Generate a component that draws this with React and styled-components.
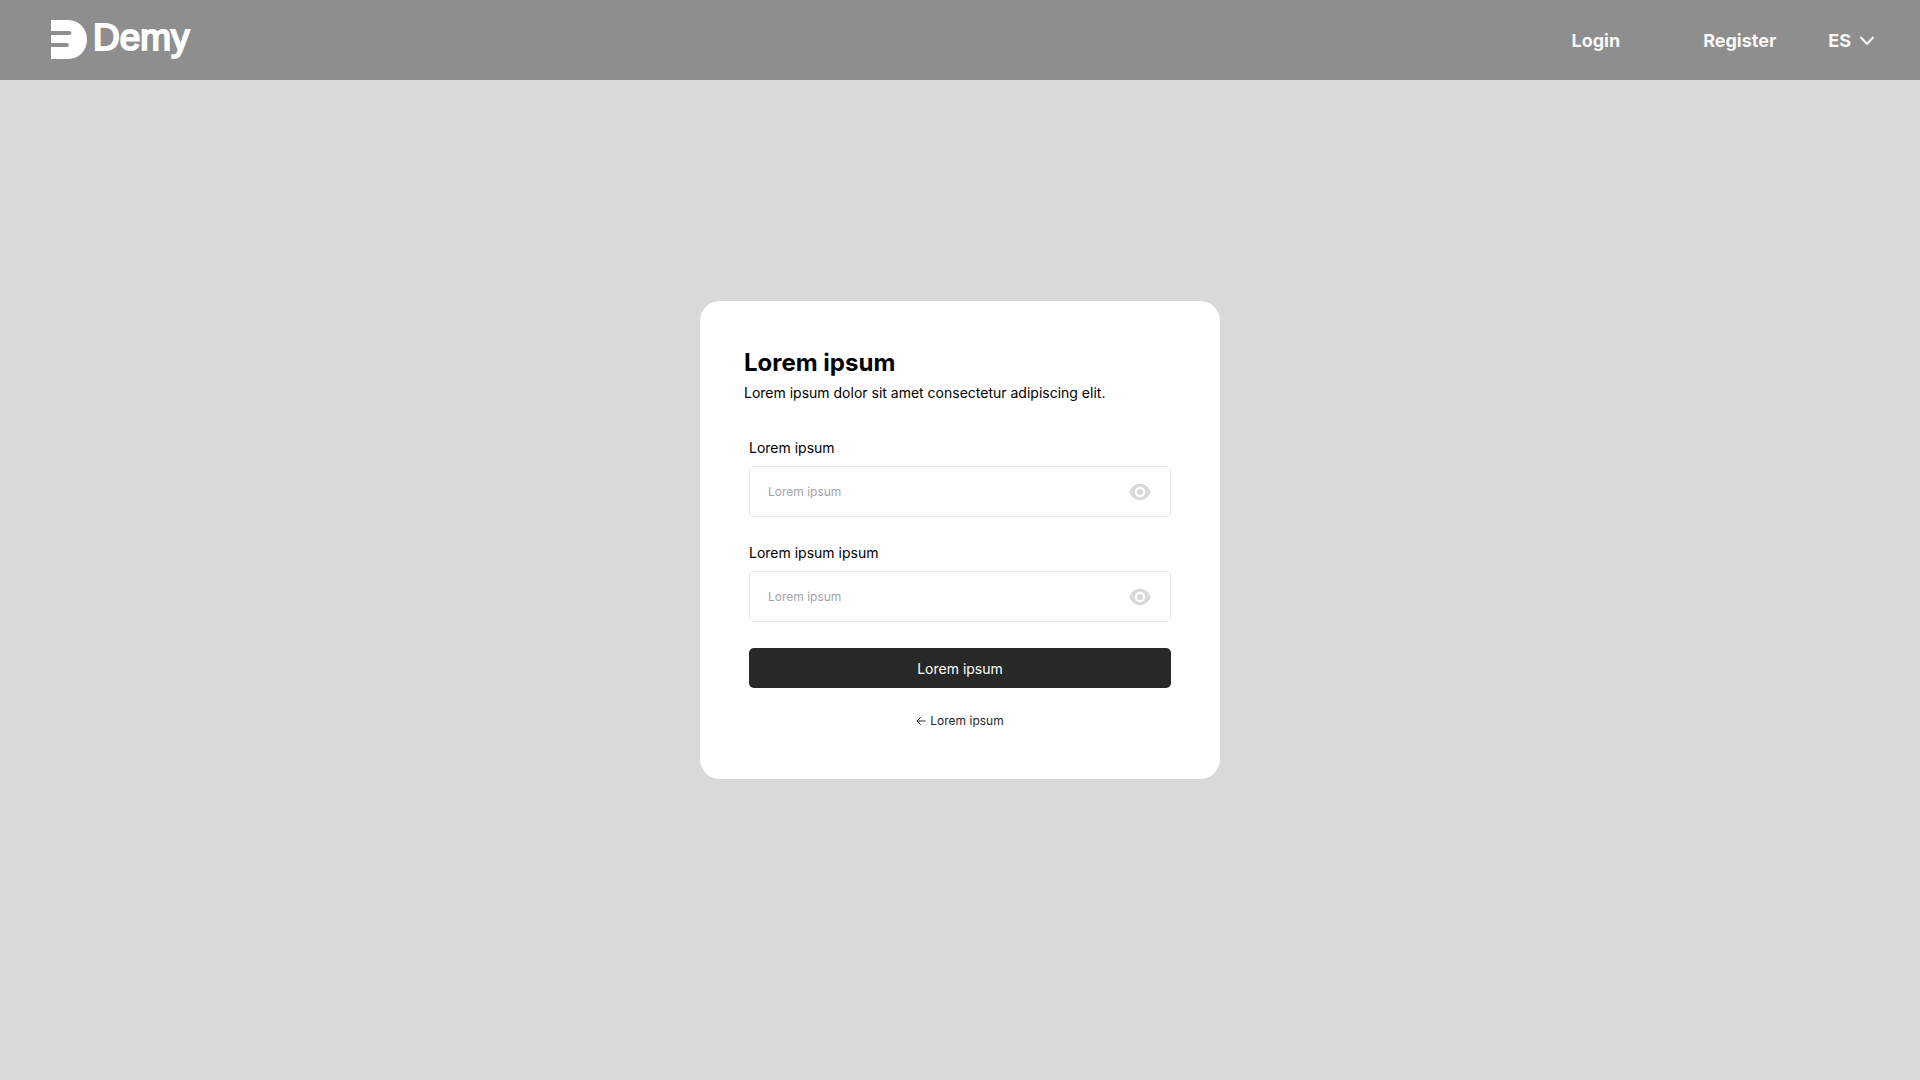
import React, { useState } from "react";
import styled, { createGlobalStyle } from "styled-components";

const GlobalStyle = createGlobalStyle`
  *, *::before, *::after { box-sizing: border-box; }
  body { margin: 0; background: #d9d9d9; font-family: Inter, "Liberation Sans", sans-serif; color: #000; }
  input, button, select { font-family: inherit; }
`;

const Page = styled.div`
  display: flex;
  flex-direction: column;
  min-height: 100vh;
`;

const Header = styled.header`
  display: flex;
  align-items: center;
  justify-content: space-between;
  height: 80px;
  padding: 0 44px 0 51px;
  background: #8e8e8e;
`;

const Logo = styled.a`
  display: flex;
  align-items: flex-start;
  gap: 6px;
  padding-bottom: 2px;
  color: #fff;
  text-decoration: none;
`;

const LogoMark = styled.svg`
  display: block;
  width: 36px;
  height: 39px;
`;

const LogoName = styled.span`
  font: 400 37px/36px "Liberation Sans", sans-serif;
  -webkit-text-stroke: 2px #fff;
`;

const Nav = styled.nav`
  display: flex;
  align-items: center;
  padding-top: 2px;
`;

const NavLink = styled.a`
  margin-right: ${(p) => (p.$wide ? "83px" : "52px")};
  color: #f8f8f8;
  font-size: 18px;
  font-weight: 700;
  line-height: 24px;
  text-decoration: none;
`;

const Language = styled.label`
  display: flex;
  align-items: center;
  gap: 7px;
  color: #f8f8f8;
`;

const LanguageSelect = styled.select`
  appearance: none;
  field-sizing: content;
  padding: 0;
  border: 0;
  background: transparent;
  color: inherit;
  font-size: 18px;
  font-weight: 700;
  line-height: 24px;
`;

const Main = styled.main`
  display: flex;
  flex: 1;
  align-items: center;
  justify-content: center;
  padding: 0 16px 80px;
`;

const Card = styled.section`
  width: 100%;
  max-width: 520px;
  padding: 44px 44px 49px;
  border-radius: 20px;
  background: #fff;
`;

const Title = styled.h1`
  margin: 0;
  font-size: 24px;
  font-weight: 700;
  line-height: 36px;
`;

const Subtitle = styled.p`
  margin: 0;
  font-size: 14px;
  line-height: 24px;
`;

const Form = styled.form`
  display: flex;
  flex-direction: column;
  padding: 33px 5px 0;
`;

const Fields = styled.div`
  display: flex;
  flex-direction: column;
  gap: 26px;
  margin-bottom: 26px;
`;

const Field = styled.div`
  display: flex;
  flex-direction: column;
  gap: 8px;
`;

const Label = styled.label`
  font-size: 14px;
  line-height: 20px;
`;

const InputBox = styled.div`
  display: flex;
  align-items: center;
  height: 51px;
  padding: 0 18px;
  border: 1px solid #e9e9e9;
  border-radius: 4px;
`;

const Input = styled.input`
  flex: 1;
  min-width: 0;
  padding: 0;
  border: 0;
  outline: 0;
  background: transparent;
  font-size: 12px;
  line-height: 20px;
  &::placeholder { color: #a3a3a8; opacity: 1; }
`;

const EyeButton = styled.button`
  display: flex;
  padding: 0;
  border: 0;
  background: transparent;
  color: #d9d9d9;
  cursor: pointer;
`;

const Submit = styled.button`
  height: 40px;
  border: 0;
  border-radius: 5px;
  background: #282828;
  color: #fff;
  font-size: 14px;
  cursor: pointer;
`;

const BackLink = styled.a`
  display: flex;
  align-items: center;
  align-self: center;
  gap: 4px;
  margin-top: 24px;
  color: #282828;
  font-size: 12px;
  line-height: 18px;
  text-decoration: none;
`;

function PasswordField({ id, label }) {
  const [visible, setVisible] = useState(false);
  return (
    <Field>
      <Label htmlFor={id}>{label}</Label>
      <InputBox>
        <Input id={id} type={visible ? "text" : "password"} placeholder="Lorem ipsum" />
        <EyeButton type="button" aria-label="Show password" onClick={() => setVisible(!visible)}>
          <svg width="24" height="24" viewBox="0 0 24 24" fill="currentColor" aria-hidden="true">
            <path fillRule="evenodd" d="M12 3.8C7.2 3.8 3.1 7.2 1.2 12c1.9 4.8 6 8.2 10.8 8.2s8.900-3.400 10.800-8.200C20.900 7.200 16.800 3.800 12 3.800Zm0 13.400a5.200 5.200 0 1 1 0-10.400 5.200 5.200 0 0 1 0 10.400Zm0-2.100a3.100 3.100 0 1 0 0-6.200 3.100 3.100 0 0 0 0 6.200Z" />
          </svg>
        </EyeButton>
      </InputBox>
    </Field>
  );
}

export default function App() {
  return (
    <Page>
      <GlobalStyle />
      <Header>
        <Logo href="#">
          <LogoMark viewBox="0 0 36 39" fill="#fff" aria-hidden="true">
            <path d="M0 0H17C28 0 36 8.500 36 19.500S28 39 17 39H0V27H15.500Q18 27 18 25T15.500 23H0V15H18Q20.500 15 20.500 13T18 11H0Z" />
          </LogoMark>
          <LogoName>Demy</LogoName>
        </Logo>
        <Nav>
          <NavLink href="#login" $wide>Login</NavLink>
          <NavLink href="#register">Register</NavLink>
          <Language>
            <LanguageSelect aria-label="Language" defaultValue="ES">
              <option value="ES">ES</option>
            </LanguageSelect>
            <svg width="18" height="18" viewBox="0 0 18 18" fill="none" stroke="currentColor" strokeWidth="2" strokeLinecap="round" strokeLinejoin="round" aria-hidden="true">
              <path d="M3 5.500 9 12l6-6.500" />
            </svg>
          </Language>
        </Nav>
      </Header>
      <Main>
        <Card>
          <Title>Lorem ipsum</Title>
          <Subtitle>Lorem ipsum dolor sit amet consectetur adipiscing elit.</Subtitle>
          <Form onSubmit={(e) => e.preventDefault()}>
            <Fields>
              <PasswordField id="password" label="Lorem ipsum" />
              <PasswordField id="password-repeat" label="Lorem ipsum ipsum" />
            </Fields>
            <Submit type="submit">Lorem ipsum</Submit>
            <BackLink href="#back">
              <svg width="10" height="10" viewBox="0 0 10 10" fill="none" stroke="currentColor" strokeLinecap="round" strokeLinejoin="round" aria-hidden="true">
                <path d="M9.200 5H1M4.500 1.500 1 5l3.500 3.500" />
              </svg>
              Lorem ipsum
            </BackLink>
          </Form>
        </Card>
      </Main>
    </Page>
  );
}
